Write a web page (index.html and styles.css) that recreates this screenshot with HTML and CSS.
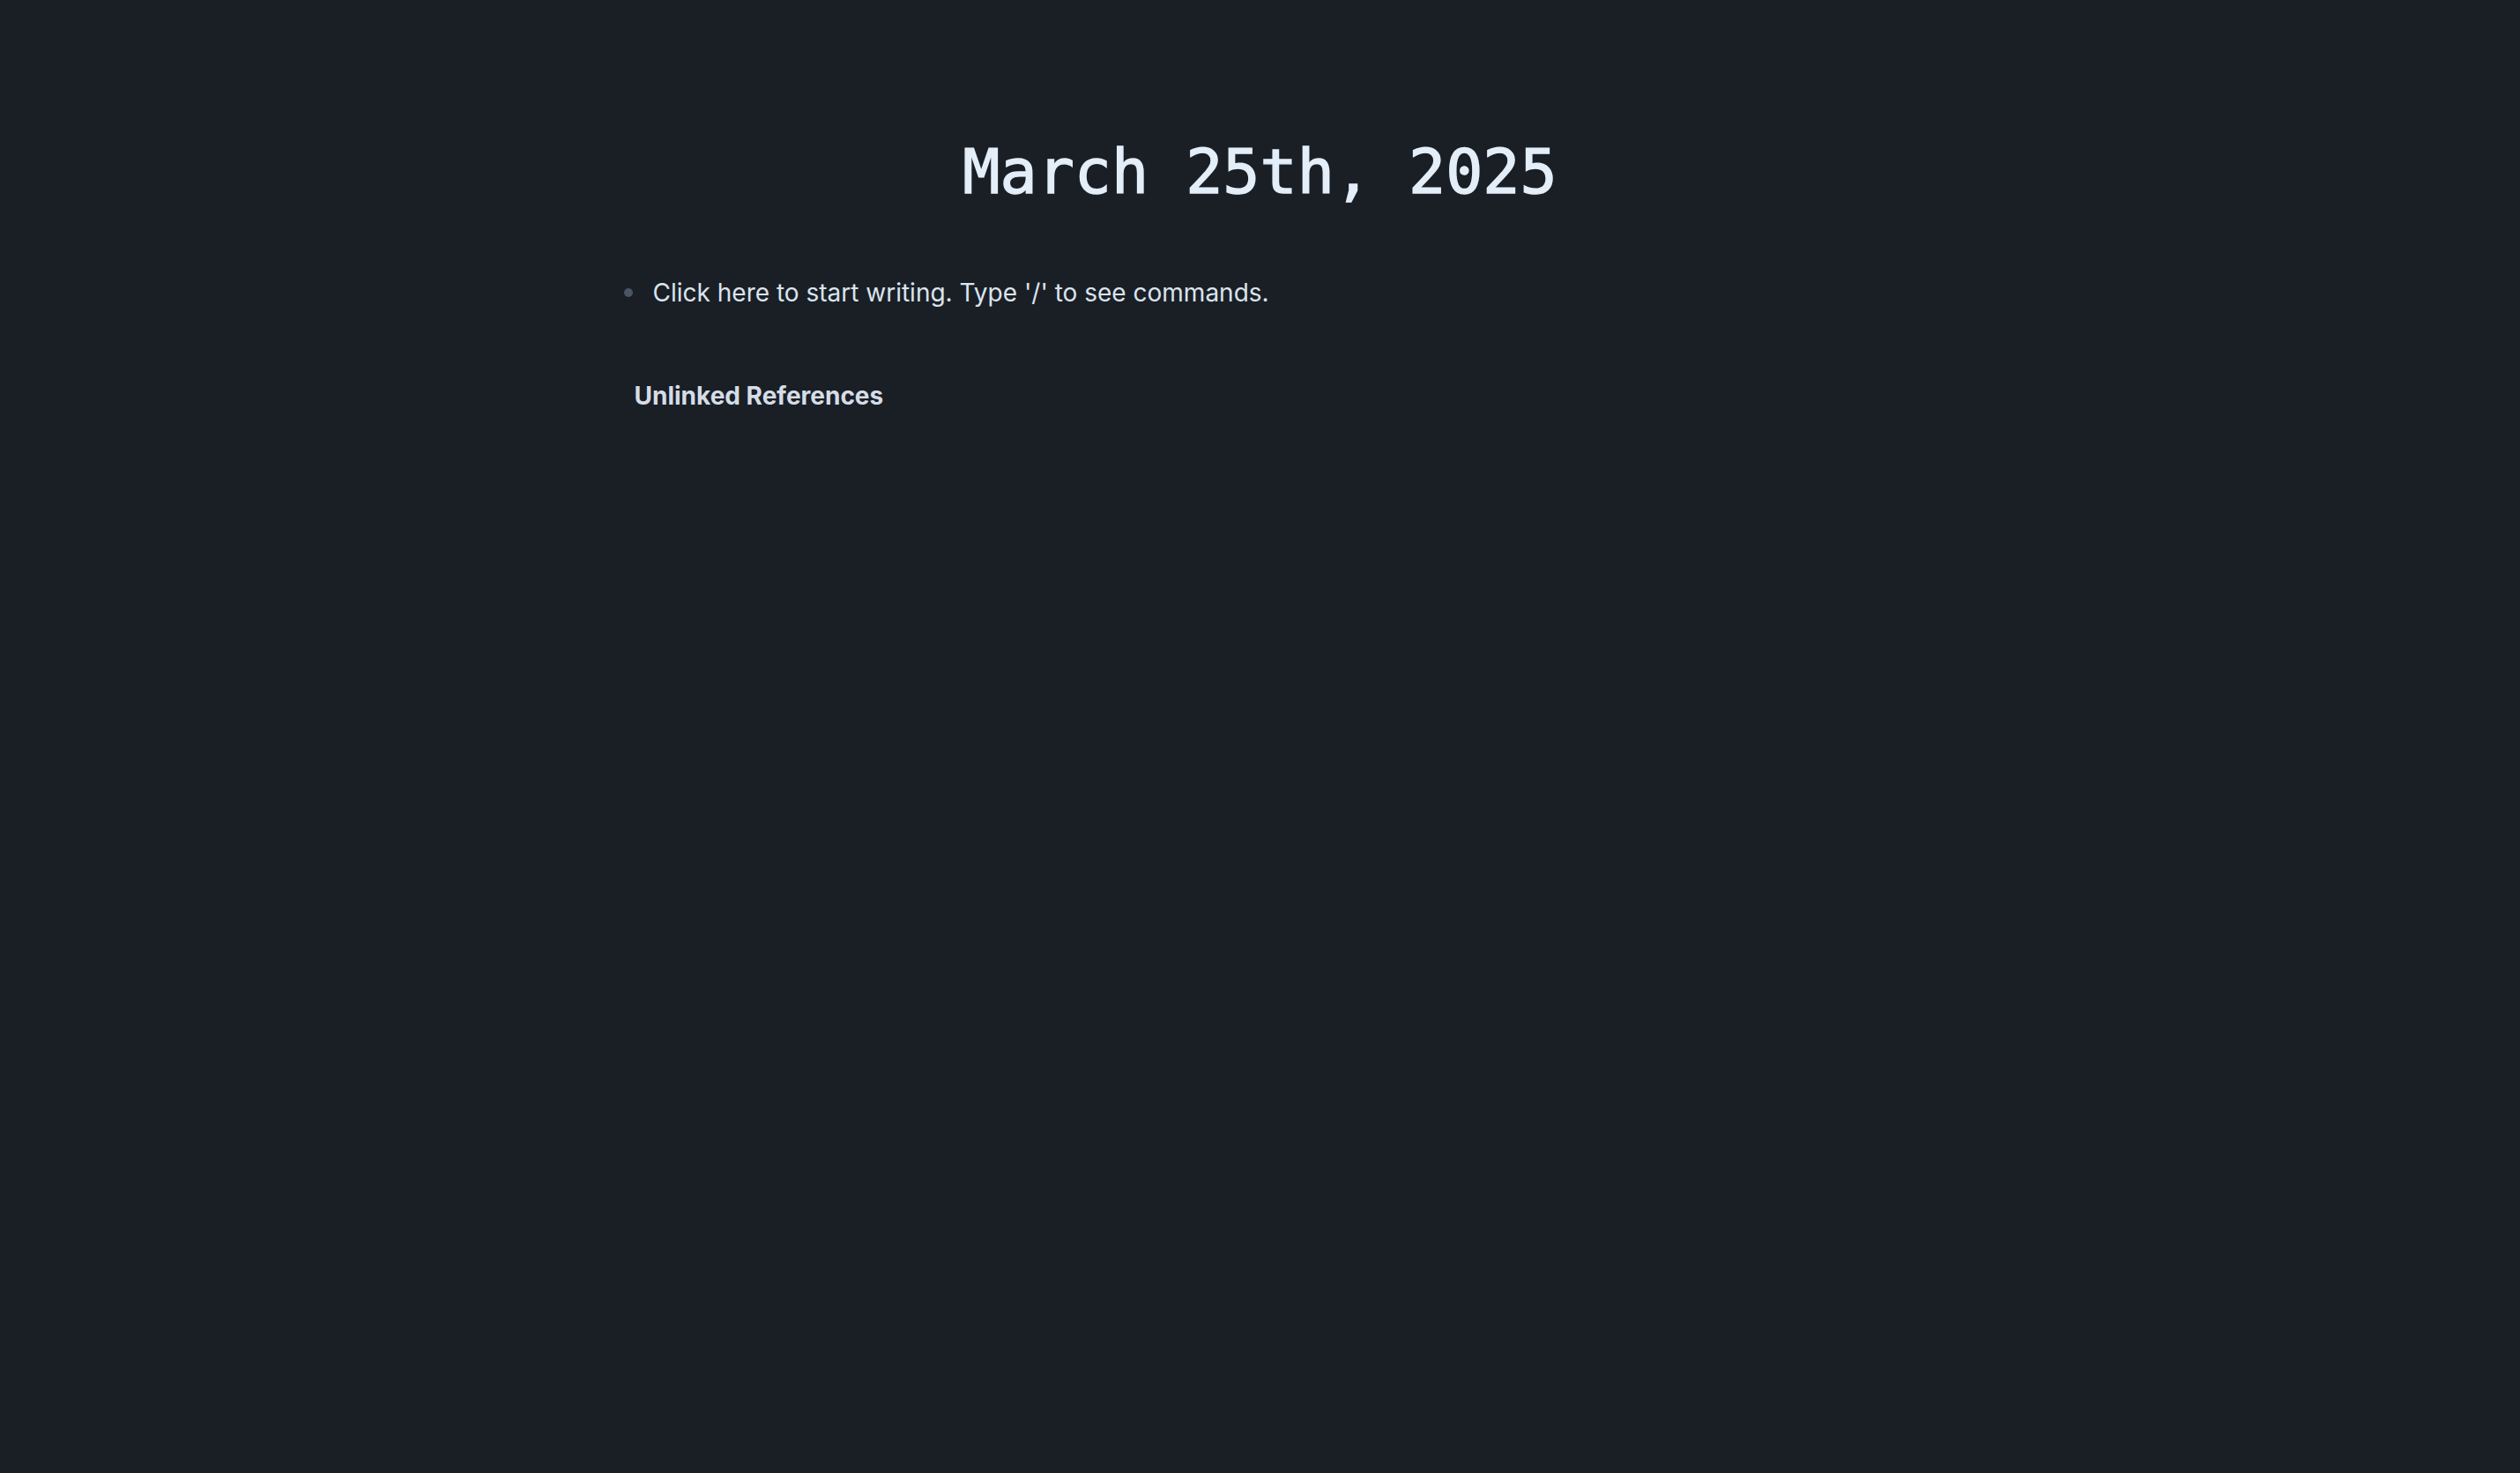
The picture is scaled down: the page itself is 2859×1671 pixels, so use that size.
FILE: index.html
```html
<!DOCTYPE html>
<html>
<head>
<meta charset="utf-8">
<link rel="stylesheet" href="styles.css">
</head>
<body>
<main class="page">
  <h1 class="journal-title">March 25th, 2025</h1>
  <div class="blocks">
    <div class="block">
      <span class="bullet"></span>
      <span class="block-text">Click here to start writing. Type '/' to see commands.</span>
    </div>
  </div>
  <div class="references">
    <h2 class="ref-title">Unlinked References</h2>
  </div>
</main>
</body>
</html>
```

FILE: styles.css
```css
html, body {
  margin: 0;
  padding: 0;
  background: #1a1f26;
  height: 100%;
}
body {
  font-family: Inter, "Noto Sans", sans-serif;
  color: #d8e1ea;
}
.page {
  width: 1460px;
  margin: 0 auto;
  padding-top: 145px;
}
.journal-title {
  font-family: "DejaVu Sans Mono", monospace;
  font-weight: 400;
  font-size: 70px;
  line-height: 100px;
  margin: 0;
  text-align: center;
  color: #e4eef8;
  -webkit-text-stroke: 1.4px #e4eef8;
}
.blocks {
  margin-top: 67px;
  padding-left: 8px;
}
.block {
  display: flex;
  align-items: center;
  height: 40px;
}
.bullet {
  width: 10px;
  height: 10px;
  border-radius: 50%;
  background: #4b5564;
  margin-right: 23px;
  flex: none;
}
.block-text {
  font-size: 28px;
  color: #dbe4ed;
}
.references {
  margin-top: 77px;
  padding-left: 20px;
}
.ref-title {
  margin: 0;
  font-size: 28px;
  font-weight: 700;
  color: #d5dde6;
  line-height: 40px;
}
```
